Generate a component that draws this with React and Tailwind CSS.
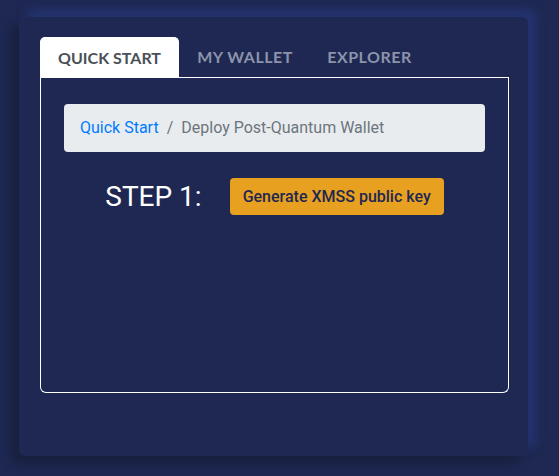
export default function App() {
  const tabs = [
    { label: 'QUICK START', w: 'w-[139px]' },
    { label: 'MY WALLET', w: 'w-[132px]' },
    { label: 'EXPLORER', w: 'w-[117px]' },
  ]

  return (
    <div className="w-[559px] h-[476px] bg-[#1e2852] pt-[17px] pl-[19px] overflow-hidden">
      <div className="w-[509px] h-[439px] rounded-[6px] bg-[#1e2852] pt-[20px] pl-[21px] pr-[19px] shadow-[-8px_8px_10px_#19203f,8px_-8px_10px_#24336f]">
        <div className="flex font-['Lato',sans-serif] font-bold text-[16px]">
          {tabs.map((t, i) => (
            <div
              key={t.label}
              className={
                i === 0
                  ? `${t.w} h-[41px] flex items-center justify-center pb-[1px] bg-white text-[#4a4f58] rounded-t-[5px] border border-white border-b-0`
                  : `${t.w} h-[41px] flex items-center justify-center pb-[1px] text-[#8c93aa] border-b border-white flex-none tracking-[0.5px]`
              }
            >
              {t.label}
            </div>
          ))}
          <div className="flex-1 border-b border-white" />
        </div>
        <div className="h-[315px] border border-t-0 border-white rounded-b-[6px] px-[23px] pt-[26px] font-['Roboto',sans-serif]">
          <div className="h-[48px] bg-[#e9ecef] rounded-[4px] px-[16px] flex items-center text-[16px]">
            <span className="text-[#007bff]">Quick Start</span>
            <span className="text-[#6c757d] px-[8px]">/</span>
            <span className="text-[#6c757d]">Deploy Post-Quantum Wallet</span>
          </div>
          <div className="mt-[26px] flex items-center justify-center gap-[28px]">
            <span className="text-white text-[28px] font-normal leading-none">STEP 1:</span>
            <button className="h-[37px] px-[13px] bg-[#e8a020] rounded-[4px] text-[#1e2852] text-[16px] font-medium">
              Generate XMSS public key
            </button>
          </div>
        </div>
      </div>
    </div>
  )
}
